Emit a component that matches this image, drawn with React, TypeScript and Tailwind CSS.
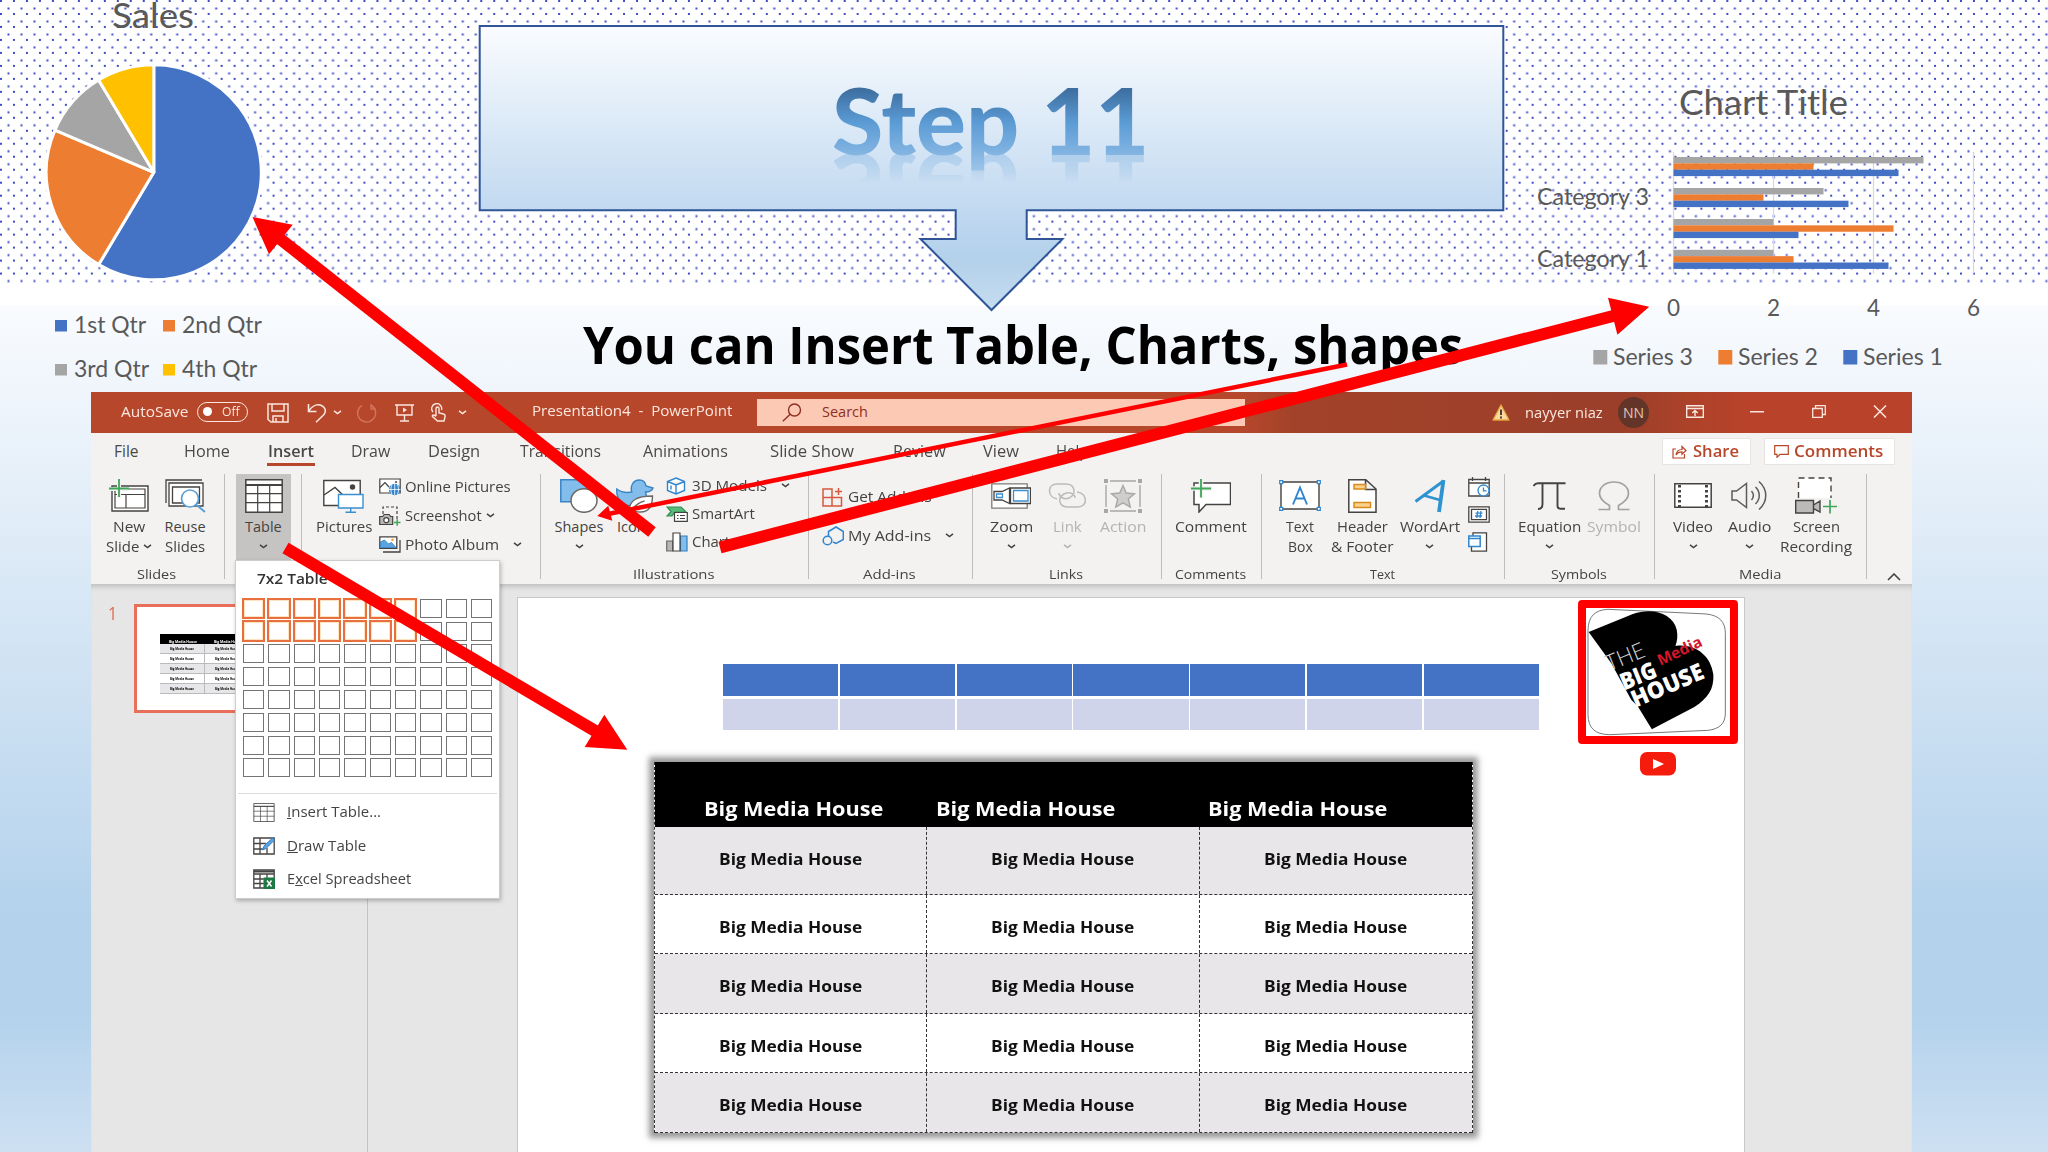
import { useLayoutEffect, useRef } from "react";
import type { ReactNode } from "react";
import clsx from "clsx";

// Stretches a single line of text to the width of its box
const Fit = ({ children, className }: { children: ReactNode; className?: string }) => {
  const box = useRef<HTMLSpanElement>(null);
  const text = useRef<HTMLSpanElement>(null);

  useLayoutEffect(() => {
    if (!box.current || !text.current) return;
    const ratio = box.current.clientWidth / text.current.offsetWidth;
    text.current.style.transform = `scaleX(${ratio})`;
  }, []);

  return (
    <span ref={box} className={clsx("block shrink-0 whitespace-nowrap", className)}>
      <span ref={text} className="inline-block origin-left">
        {children}
      </span>
    </span>
  );
};

const Chevron = ({ className }: { className?: string }) => (
  <svg viewBox="0 0 9 5" className={clsx("w-[9px] h-[5px] shrink-0", className)} fill="none" stroke="currentColor" strokeWidth="1.5">
    <path d="M1 .8 4.5 3.6 8 .8" />
  </svg>
);

/* ---------- slide background ---------- */

const Background = () => (
  <div className="absolute inset-0 flex flex-col">
    <svg className="w-full h-[284px] shrink-0">
      <defs>
        <pattern id="dots" width="12.98" height="12.98" patternUnits="userSpaceOnUse">
          <rect x="0" y="0" width="2" height="2" fill="#3f4cc4" />
          <rect x="7.5" y="7.5" width="2" height="2" fill="#3f4cc4" />
        </pattern>
      </defs>
      <rect width="2048" height="283" fill="url(#dots)" />
    </svg>
    <div className="h-[22px] bg-white" />
    <div className="flex-1 bg-[linear-gradient(#f9fbfe_0%,#b4d2ec_72%,#b4d2ec_84%,#cde0f2_100%)]" />
  </div>
);

/* ---------- charts ---------- */

const slices = [
  { value: 8.2, color: "#4472c4" },
  { value: 3.2, color: "#ed7d31" },
  { value: 1.4, color: "#a5a5a5" },
  { value: 1.2, color: "#ffc000" },
];

const quarters = [
  { label: "1st Qtr", x: 55, y: 333, w: 71, color: "#4472c4" },
  { label: "2nd Qtr", x: 163, y: 333, w: 79, color: "#ed7d31" },
  { label: "3rd Qtr", x: 55, y: 377, w: 74, color: "#a5a5a5" },
  { label: "4th Qtr", x: 163, y: 377, w: 74, color: "#ffc000" },
];

const PieChart = () => {
  const total = slices.reduce((sum, s) => sum + s.value, 0);
  const cx = 153.8;
  const cy = 172.3;
  const r = 107.5;
  let angle = 0;
  const paths = slices.map((s) => {
    const from = angle;
    angle += (s.value / total) * Math.PI * 2;
    const large = angle - from > Math.PI ? 1 : 0;
    return {
      color: s.color,
      d: `M${cx} ${cy}L${cx + r * Math.sin(from)} ${cy - r * Math.cos(from)}A${r} ${r} 0 ${large} 1 ${cx + r * Math.sin(angle)} ${cy - r * Math.cos(angle)}Z`,
    };
  });

  return (
    <svg viewBox="0 0 300 390" className="absolute left-0 top-0 w-[300px] h-[390px] font-[Lato,sans-serif]" fill="#595959">
      <text x="112" y="27.5" fontSize="34" textLength="82" lengthAdjust="spacingAndGlyphs">Sales</text>
      {paths.map((p) => (
        <path key={p.color} d={p.d} fill={p.color} stroke="#fff" strokeWidth="3" strokeLinejoin="round" />
      ))}
      {quarters.map((q) => (
        <g key={q.label}>
          <rect x={q.x} y={q.y - 13} width="12" height="11.5" fill={q.color} />
          <text x={q.x + 19} y={q.y} fontSize="23" textLength={q.w + 1} lengthAdjust="spacingAndGlyphs">{q.label}</text>
        </g>
      ))}
    </svg>
  );
};

const categories = [
  { y: 157, values: [5, 2.8, 4.5] },
  { y: 188, values: [3, 1.8, 3.5] },
  { y: 219, values: [2, 4.4, 2.5] },
  { y: 249.8, values: [2, 2.4, 4.3] },
];
const seriesColors = ["#a5a5a5", "#ed7d31", "#4472c4"];

const BarChart = () => (
  <svg viewBox="1530 60 450 330" className="absolute left-[1530px] top-[60px] w-[450px] h-[330px] font-[Lato,sans-serif]" fill="#595959">
    <text x="1679" y="114.5" fontSize="35" textLength="169" lengthAdjust="spacingAndGlyphs">Chart Title</text>
    {[0, 2, 4, 6].map((n) => (
      <g key={n}>
        <path d={`M${1673.5 + n * 50} 152V273.5`} stroke="#d9d9d9" strokeWidth="1.3" />
        <text x={1673.5 + n * 50} y="315.5" fontSize="22.5" textAnchor="middle">{n}</text>
      </g>
    ))}
    {categories.map((c) =>
      c.values.map((v, i) => (
        <rect key={`${c.y}-${i}`} x="1673.5" y={c.y + i * 6.35} width={v * 50} height="6.4" fill={seriesColors[i]} />
      )),
    )}
    <text x="1537" y="205" fontSize="23" textLength="112" lengthAdjust="spacingAndGlyphs">Category 3</text>
    <text x="1537" y="266.5" fontSize="23" textLength="112" lengthAdjust="spacingAndGlyphs">Category 1</text>
    {seriesColors.map((color, i) => (
      <g key={color}>
        <rect x={1593.3 + i * 125} y="350" width="14" height="14.5" fill={color} />
        <text x={1613 + i * 125} y="365" fontSize="23" textLength="80" lengthAdjust="spacingAndGlyphs">{`Series ${3 - i}`}</text>
      </g>
    ))}
  </svg>
);

/* ---------- banner ---------- */

const Banner = () => (
  <div className="absolute left-[478px] top-[24px] w-[1028px] h-[290px]">
    <svg viewBox="478 24 1028 290" className="absolute inset-0">
      <defs>
        <linearGradient id="banner" x1="0" y1="0" x2="0" y2="1">
          <stop offset="0" stopColor="#fafcff" />
          <stop offset=".74" stopColor="#b9d4ee" />
          <stop offset=".83" stopColor="#b4d1ea" />
          <stop offset="1" stopColor="#c5dcf0" />
        </linearGradient>
      </defs>
      <path
        d="M479.7 26H1503.3V210.3H1026.7V239H1062.5L991.5 310 920.5 239H955.7V210.3H479.7Z"
        fill="url(#banner)"
        stroke="#2f5597"
        strokeWidth="2"
      />
    </svg>
    <h1 className="relative ml-[354px] mt-[41px] w-[317px] h-[110px] leading-[110px] text-[92px] font-black font-[Lato,sans-serif] [-webkit-box-reflect:below_-42px_linear-gradient(transparent_55%,rgba(0,0,0,0.42)_80%)]">
      <Fit className="w-[317px] [&>span]:bg-[linear-gradient(#3a6a9a_19%,#5b9bd5_52%,#7cb0e0_76%,#a3c8ea_100%)] [&>span]:bg-clip-text [&>span]:text-transparent">Step 11</Fit>
    </h1>
  </div>
);

/* ---------- title bar ---------- */

const TitleBar = () => (
  <div className="h-[41px] shrink-0 flex items-center bg-[linear-gradient(90deg,#b7472a_0_63%,#a3422a_66%,#9b3f2a_84%,#ad4229_88%,#b8432a_91%,#b8432a_100%)] text-[#fbe6df] text-[14.5px] font-medium">
    <Fit className="ml-[30px] mt-[-2px] w-[67px]">AutoSave</Fit>
    <div className="ml-[9px] mt-[-2px] w-[51px] h-[20px] rounded-full border-[1.5px] border-[#fbe6df] flex items-center">
      <span className="ml-[5px] size-[9px] rounded-full bg-white" />
      <Fit className="ml-[10px] w-[18px] text-[13.5px] leading-none">Off</Fit>
    </div>
    <svg viewBox="0 0 22 20" className="ml-[19px] w-[22px] h-[20px]" fill="none" stroke="currentColor" strokeWidth="1.5">
      <path d="M1 1h20v18H4l-3-2.500z M5 1v7h12V1 M6 19v-6h10v6 M9 19v-4" />
    </svg>
    <svg viewBox="0 0 20 20" className="ml-[18px] w-[20px] h-[20px]" fill="none" stroke="currentColor" strokeWidth="1.6">
      <path d="M1.500 1v7.500h8 M1.800 8C5 3 10 .8 14.500 2.500c4 1.800 5 6 2.500 9L9 19.300" />
    </svg>
    <Chevron className="ml-[6px]" />
    <svg viewBox="0 0 21 21" className="ml-[14px] w-[21px] h-[21px] text-[#d2705a]" fill="none" stroke="currentColor" strokeWidth="1.5">
      <path d="M15 2v5h5 M15.500 3.500A9 9 0 1 1 6 3.300" />
    </svg>
    <svg viewBox="0 0 19 18" className="ml-[18px] w-[19px] h-[18px]" fill="none" stroke="currentColor" strokeWidth="1.4">
      <path d="M0 1h19 M2 1v10h15V1 M9.500 11v6 M5 17h9" />
      <path d="M8 3.500v5l4-2.500z" fill="currentColor" stroke="none" />
    </svg>
    <svg viewBox="0 0 15 19" className="ml-[17px] w-[15px] h-[19px]" fill="none" stroke="currentColor" strokeWidth="1.4">
      <path d="M2 9A5 5 0 1 1 10.500 7 M5 13V5.500a1.500 1.500 0 0 1 3 0V10l4.500 1c1.500.4 1.800 1.300 1.600 2.500L13 18H6.500L1.500 13.500c-.5-1.200.8-2 2-1.200L5 13.500" />
    </svg>
    <Chevron className="ml-[12px]" />
    <Fit className="ml-[65px] mt-[-3px] w-[200px] whitespace-pre">{"Presentation4  -  PowerPoint"}</Fit>
    <div className="ml-[25px] w-[488px] h-[27px] bg-[#fcc9b5] flex items-center text-[#8f2f20]">
      <svg viewBox="0 0 20 19" className="ml-[25px] w-[20px] h-[19px]" fill="none" stroke="currentColor" strokeWidth="1.4">
        <circle cx="12.500" cy="7" r="6" />
        <path d="M8.200 11.300.800 18.200" />
      </svg>
      <Fit className="ml-[20px] mt-[-2px] w-[46px]">Search</Fit>
    </div>
    <svg viewBox="0 0 18 17" className="ml-[247px] w-[18px] h-[17px]">
      <path d="M9 1 17 16H1z" fill="#fbd9a0" stroke="#e8a33d" strokeWidth="1.300" strokeLinejoin="round" />
      <path d="M9 5.500v5.500 M9 12.500v2" stroke="#3b3026" strokeWidth="1.800" />
    </svg>
    <Fit className="ml-[15px] w-[78px]">nayyer niaz</Fit>
    <div className="ml-[15px] size-[31px] rounded-full bg-[#633529] text-[#e3c3b9] flex items-center justify-center">
      <Fit className="w-[21px] text-[14px] font-normal">NN</Fit>
    </div>
    <svg viewBox="0 0 18 13" className="ml-[37px] mt-[-2px] w-[18px] h-[13px]" fill="none" stroke="currentColor" strokeWidth="1.400">
      <path d="M.7.700h16.600v11.600H.7z M.7 3.500h16.600 M9 11V5.500 M6.300 8 9 5.500 11.700 8" />
    </svg>
    <svg viewBox="0 0 14 2" className="ml-[46px] mt-[-2px] w-[14px] h-[2px]">
      <rect width="14" height="1.500" fill="currentColor" />
    </svg>
    <svg viewBox="0 0 14 13" className="ml-[48px] mt-[-2px] w-[14px] h-[13px]" fill="none" stroke="currentColor" strokeWidth="1.300">
      <path d="M.7 3.500h9.600v8.800H.7z M3.500 3.500V.700h9.800V9.500h-3" />
    </svg>
    <svg viewBox="0 0 14 13" className="ml-[47px] mt-[-2px] w-[14px] h-[13px]" fill="none" stroke="currentColor" strokeWidth="1.500">
      <path d="M1 .5 13 12.500 M13 .5 1 12.500" />
    </svg>
  </div>
);

/* ---------- tabs ---------- */

const tabs = [
  { label: "File", box: "ml-[23px] w-[25px]" },
  { label: "Home", box: "ml-[45px] w-[46px]" },
  { label: "Insert", box: "ml-[38px] w-[46px]", active: true },
  { label: "Draw", box: "ml-[37px] w-[39px]" },
  { label: "Design", box: "ml-[38px] w-[52px]" },
  { label: "Transitions", box: "ml-[40px] w-[81px]" },
  { label: "Animations", box: "ml-[42px] w-[85px]" },
  { label: "Slide Show", box: "ml-[42px] w-[84px]" },
  { label: "Review", box: "ml-[39px] w-[53px]" },
  { label: "View", box: "ml-[37px] w-[36px]" },
  { label: "Help", box: "ml-[37px] w-[33px]" },
];

const Tabs = () => (
  <div className="h-[37px] shrink-0 flex items-center text-[15.5px] text-[#4b4846]">
    {tabs.map((t) => (
      <div key={t.label} className="relative flex">
        <Fit className={clsx(t.box, t.active && "font-semibold")}>{t.label}</Fit>
        {t.active && <span className="absolute right-[-1px] top-[23px] w-[48px] h-[3px] bg-[#b7472a]" />}
      </div>
    ))}
    <div className="ml-auto w-[89px] h-[27px] bg-white border border-[#e8e4e2] flex items-center text-[#b7472a] font-semibold">
      <svg viewBox="0 0 15 14" className="ml-[9px] w-[15px] h-[14px]" fill="none" stroke="currentColor" strokeWidth="1.200">
        <path d="M4 4H1v9h11.500V9 M4 10c.5-4 3-5.500 6-5.500V1.500l4 4-4 3.800V6.800C7.500 6.800 5.500 7.500 4 10z" />
      </svg>
      <Fit className="ml-[6px] w-[46px]">Share</Fit>
    </div>
    <div className="ml-[13px] mr-[17px] w-[131px] h-[27px] bg-white border border-[#e8e4e2] flex items-center text-[#b7472a] font-semibold">
      <svg viewBox="0 0 15 13" className="ml-[9px] w-[15px] h-[13px]" fill="none" stroke="currentColor" strokeWidth="1.200">
        <path d="M.7.700h13.600v8.600H6l-3 3v-3H.7z" />
      </svg>
      <Fit className="ml-[5px] w-[89px]">Comments</Fit>
    </div>
  </div>
);

/* ---------- ribbon ---------- */

const Sep = () => <div className="w-px h-[105px] shrink-0 bg-[#bfbdbb]" />;

const Group = ({ label, width, labelWidth, children }: { label?: string; width: string; labelWidth?: string; children: ReactNode }) => (
  <div className={clsx("h-[108px] shrink-0 flex flex-col", width)}>
    <div className="h-[92px] flex items-start">{children}</div>
    {label && (
      <div className="h-[16px] pr-[2px] flex items-center justify-center text-[13px] leading-[16px]">
        <Fit className={labelWidth}>{label}</Fit>
      </div>
    )}
  </div>
);

type BigButtonProps = {
  icon: ReactNode;
  box: string;
  first: [string, string];
  second?: [string, string];
  arrow?: boolean;
};

const BigButton = ({ icon, box, first, second, arrow }: BigButtonProps) => (
  <div className={clsx("shrink-0 flex flex-col items-center h-[86px] text-[14.500px] leading-[19.5px]", box)}>
    <div className="h-[43px] flex items-center">{icon}</div>
    <Fit className={first[1]}>{first[0]}</Fit>
    <div className="h-[19.5px] flex items-center">
      {second && <Fit className={second[1]}>{second[0]}</Fit>}
      {arrow && <Chevron className={second ? "ml-[4px]" : ""} />}
    </div>
  </div>
);

const SmallButton = ({ icon, label, box, arrow, row }: { icon: ReactNode; label: string; box: string; arrow?: string; row: string }) => (
  <div className={clsx("flex items-center text-[14.500px]", row)}>
    {icon}
    <Fit className={clsx("ml-[4px]", box)}>{label}</Fit>
    {arrow && <Chevron className={arrow} />}
  </div>
);

const ink = "#454341";

const TableIcon = ({ className }: { className: string }) => (
  <svg viewBox="0 0 38 34" className={className} fill="#fff" stroke={ink} strokeWidth="1.500">
    <path d="M.8.800h36.400v32.400H.8z" />
    <path d="M.8 6h36.400" strokeWidth="2" />
    <path d="M.8 14.700h36.400 M.8 23.700h36.400 M12.700 6v27 M24.700 6v27" strokeWidth="1.200" />
  </svg>
);

const NewSlideIcon = () => (
  <svg viewBox="0 0 40 34" className="w-[40px] h-[34px]" fill="#fff" stroke={ink} strokeWidth="1.400">
    <path d="M3 7h36v25H3z" />
    <path d="M6 10h30v19H6z M6 15.500h30 M17 15.500v13.500" strokeWidth="1.200" />
    <path d="M0 10h20 M10 0v19" stroke="#f3f2f1" strokeWidth="4" />
    <path d="M0 9.500h20 M10 0v18" stroke="#3fa65a" strokeWidth="1.800" />
  </svg>
);

const ReuseIcon = () => (
  <svg viewBox="0 0 41 35" className="w-[41px] h-[35px]" fill="#fff" stroke={ink} strokeWidth="1.300">
    <path d="M1 25V2h36" fill="none" />
    <path d="M4 28V5h34v23z M7.500 25V9h27v16z" />
    <circle cx="25" cy="20.500" r="8.500" stroke="#5b9fd8" strokeWidth="1.700" />
    <path d="M31 26.500 40 34" stroke="#5b9fd8" strokeWidth="2" />
  </svg>
);

const PicturesIcon = () => (
  <svg viewBox="0 0 41 34" className="w-[41px] h-[34px]" fill="#fff" stroke={ink} strokeWidth="1.400">
    <path d="M.8 1.500h36.400v25H.8z" />
    <path d="M1 16 12 8.500 23 19" fill="none" />
    <circle cx="29.500" cy="8" r="2" fill={ink} />
    <path d="M15.500 15.500H40v13.500H15.500z" stroke="#3a8fd0" />
    <path d="M27.700 29v4 M22.500 33.200h10.500" stroke="#3a8fd0" />
  </svg>
);

const OnlinePicturesIcon = () => (
  <svg viewBox="0 0 22 18" className="w-[22px] h-[18px]" fill="#fff" stroke={ink} strokeWidth="1.200">
    <path d="M.8 1h20.400v14H.8z" />
    <path d="M1 9.500 6 4.500 10 9" fill="none" />
    <circle cx="17" cy="4" r="1" fill={ink} stroke="none" />
    <circle cx="15.700" cy="11.500" r="5.800" fill="#2f86cf" stroke="none" />
    <path d="M10 11.500h11.400 M15.700 6v11 M13 6.500c-1.500 3-1.500 7 0 10 M18.400 6.500c1.500 3 1.500 7 0 10" stroke="#fff" strokeWidth=".8" fill="none" />
  </svg>
);

const ScreenshotIcon = () => (
  <svg viewBox="0 0 22 20" className="w-[22px] h-[20px]" fill="none" stroke={ink} strokeWidth="1.200">
    <path d="M4 8V1h14v12" strokeDasharray="3 2" />
    <path d="M.7 10.500h3l1.500-2h5l1.500 2h2v8H.7z" fill="#b9b7b5" />
    <circle cx="7.300" cy="14.200" r="2.500" fill="#fff" />
    <path d="M15 16.500h6.500 M18.200 13.300v6.500" stroke="#3fa65a" strokeWidth="1.500" />
  </svg>
);

const AlbumIcon = () => (
  <svg viewBox="0 0 22 17" className="w-[22px] h-[17px]" fill="#fff" stroke={ink} strokeWidth="1.300">
    <path d="M4 16h17V4" fill="none" />
    <path d="M.8.800h17v11.500H.8z" />
    <path d="M1.500 11.500V6l4-2 4 4 3-1.500 4.500 5z" fill="#5aa5e0" stroke="#2f7fc4" strokeWidth=".8" />
    <circle cx="13.500" cy="3.700" r="1.300" fill="#f0a040" stroke="none" />
  </svg>
);

const ShapesIcon = () => (
  <svg viewBox="0 0 38 34" className="w-[38px] h-[34px]" strokeWidth="1.500">
    <path d="M.8.800h25.500v22H.8z" fill="#83bdec" stroke="#3a84c4" />
    <ellipse cx="24" cy="21.500" rx="13" ry="11.800" fill="#fff" stroke="#6b6967" />
  </svg>
);

const IconsIcon = () => (
  <svg viewBox="0 0 38 34" className="w-[38px] h-[34px]" strokeWidth="1.400">
    <path d="M.8 10c4 3 10 4 15 3C14 7 17 1 23.500 1c4 0 6 3 6.500 6l7 2c-1 3-4 4-7.500 4 3 8-4 14-13 14C6 27 0 20 .8 10z" fill="#83bdec" stroke="#3a84c4" />
    <path d="M13 33c0-12 8-16 23.500-16 0 10-4 16-12 16-4 0-7-1-8-3 4-5 8-7 12-8" fill="#fff" stroke="#6b6967" />
  </svg>
);

const CubeIcon = () => (
  <svg viewBox="0 0 22 18" className="w-[22px] h-[18px]" fill="#fff" stroke="#2f86cf" strokeWidth="1.400">
    <path d="M10 1 18.500 4.500v9L10 17 1.500 13.500v-9z M1.500 4.500 10 8l8.500-3.500 M10 8v9 M5 8.500v4" />
  </svg>
);

const SmartArtIcon = () => (
  <svg viewBox="0 0 22 16" className="w-[22px] h-[16px]" strokeWidth="1.200">
    <path d="M1 1h14l5 5H9l-3 4H1l4-4.500z" fill="#5cb87a" stroke="#2f9150" />
    <path d="M8.500 6.500h12.800v8.800H8.500z" fill="#fff" stroke={ink} />
    <path d="M11 9.500h1.500 M14 9.500h5 M11 12.500h1.500 M14 12.500h5" stroke={ink} />
  </svg>
);

const ChartIcon = () => (
  <svg viewBox="0 0 22 20" className="w-[22px] h-[20px]" strokeWidth="1.200">
    <path d="M.7 9h6v10h-6z" fill="#b9b7b5" stroke="#6b6967" />
    <path d="M14.500 4h6.500v15h-6.500z" fill="#83bdec" stroke="#2f7fc4" />
    <path d="M7 1h7v18H7z" fill="#fff" stroke={ink} />
  </svg>
);

const GetAddinsIcon = () => (
  <svg viewBox="0 0 22 20" className="w-[22px] h-[20px]" fill="none" stroke="#d9583b" strokeWidth="1.500">
    <path d="M1 2h9v17H1z M1 10.500h18.500V19H10 M16.500 1v7 M13 4.500h7" />
  </svg>
);

const MyAddinsIcon = () => (
  <svg viewBox="0 0 22 20" className="w-[22px] h-[20px]" fill="none" stroke="#2f86cf" strokeWidth="1.500">
    <path d="M6.500 10V5.500L14 1l7.300 4.500v8L14 17.500 11 16" />
    <circle cx="5.500" cy="14.500" r="4.300" />
  </svg>
);

const ZoomIcon = () => (
  <svg viewBox="0 0 40 26" className="w-[40px] h-[26px]" fill="#fff" stroke={ink} strokeWidth="1.300">
    <path d="M.8.800h35.400v24.400H.8z" stroke="#7d7b79" />
    <path d="M3 8.500h8L18.500 5v15.500L11 17H3z" />
    <path d="M5.500 11h6v3.500h-6z" stroke="#3a8fd0" />
    <path d="M19.500 5H39.500v15.500h-20z" />
    <path d="M22.500 7.500H37v10.500H22.500z" stroke="#3a8fd0" />
  </svg>
);

const LinkIcon = () => (
  <svg viewBox="0 0 38 25" className="w-[38px] h-[25px]" fill="none" stroke="#bdbbb9" strokeWidth="1.500">
    <path d="M9 16C-1 14-1 1 9 1h9c9 0 11 10 3 14-5 2-10-1-10-5" />
    <path d="M29 9c11 1 11 15 1 15H20c-9 0-11-9-4-13 6-3 11 0 11 4" />
  </svg>
);

const ActionIcon = () => (
  <svg viewBox="0 0 38 34" className="w-[38px] h-[34px]" fill="none" stroke="#a9a7a5" strokeWidth="1.400">
    <path d="M6 2h26 M6 32h26 M2 6v22 M36 6v22" />
    <path d="M0 0h4v4H0z M34 0h4v4h-4z M0 30h4v4H0z M34 30h4v4h-4z" fill="#a9a7a5" stroke="none" />
    <path d="m19 6.500 3.200 7.500 8.300.7-6.200 5.300 2 8L19 23.800 11.700 28l2-8-6.200-5.300 8.300-.7z" fill="#d0cecc" />
  </svg>
);

const CommentIcon = () => (
  <svg viewBox="0 0 40 34" className="w-[40px] h-[34px]" fill="#fff" stroke={ink} strokeWidth="1.500">
    <path d="M3 4h36.500v21.500H15l-7 7.500v-7.500H3z" />
    <path d="M0 9.500h21 M10 0v19" stroke="#f3f2f1" strokeWidth="4.500" />
    <path d="M0 9.500h20 M10 0v18.500" stroke="#3fa65a" strokeWidth="1.800" />
  </svg>
);

const TextBoxIcon = () => (
  <svg viewBox="0 0 42 31" className="w-[42px] h-[31px]" fill="#fff" stroke={ink} strokeWidth="1.400">
    <path d="M2 2h38v27H2z" />
    <g stroke="#2f86cf" strokeWidth="1.200">
      <path d="M.7.700h3v3h-3z M38.300.700h3v3h-3z M.7 27.300h3v3h-3z M38.300 27.300h3v3h-3z" />
      <path d="M14 24.500 21 7.500l7 17 M16.500 18.500h9" fill="none" strokeWidth="1.900" />
    </g>
  </svg>
);

const HeaderIcon = () => (
  <svg viewBox="0 0 29 34" className="w-[29px] h-[34px]" fill="#fff" stroke={ink} strokeWidth="1.500">
    <path d="M.8.800h17L28 10v23.200H.8z M17.500 1v9.500H28" />
    <path d="M6 5.500h11.500V10H6z M6 23.500h16.500v5H6z" fill="#fbd28b" stroke="#d98a1e" />
  </svg>
);

const WordArtIcon = () => (
  <svg viewBox="0 0 32 34" className="w-[32px] h-[34px]" fill="none" stroke="#2f93d2">
    <path d="M1.500 22.500 29.500 2" strokeWidth="3" />
    <path d="M29.500 1 25 33" strokeWidth="3.800" />
    <path d="M10 16.500 26 21" strokeWidth="2.600" />
  </svg>
);

const DateIcon = () => (
  <svg viewBox="0 0 22 20" className="w-[22px] h-[20px]" fill="#fff" stroke={ink} strokeWidth="1.300">
    <path d="M.8 2.500h20.400V19H.8z M.8 6h20.400 M4.500 0v4 M17.500 0v4" />
    <circle cx="15.500" cy="13.500" r="5.500" stroke="#2f86cf" />
    <path d="M15.500 10.500v3.300h3" stroke="#2f86cf" fill="none" />
  </svg>
);

const NumberIcon = () => (
  <svg viewBox="0 0 22 17" className="w-[22px] h-[17px]" fill="#fff" stroke={ink} strokeWidth="1.300">
    <path d="M.8.800h20.400v15.400H.8z M3.500 3.300h15v10.400h-15z" />
    <path d="M9.800 5 8.800 12 M13 5l-1 7 M7.500 7.200h7 M7 10h7" stroke="#2f86cf" />
  </svg>
);

const ObjectIcon = () => (
  <svg viewBox="0 0 22 20" className="w-[22px] h-[20px]" fill="#fff" stroke={ink} strokeWidth="1.300">
    <path d="M5 5V.800h13.500v18.400H3.500V15" />
    <path d="M.8 4h11.400v10.500H.8z M.8 6.500h11.400" stroke="#2f86cf" strokeWidth="1.500" />
  </svg>
);

const PiIcon = () => (
  <svg viewBox="0 0 33 28" className="w-[33px] h-[28px]" fill="none" stroke={ink} strokeWidth="1.900">
    <path d="M.5 4C2 1.500 3 1.200 5 1.200h27.500 M9.500 1.500V22c0 3-1 5-4.500 5 M24.500 1.500V24c0 2 1 2.700 3 2.700h4.500" />
  </svg>
);

const OmegaIcon = () => (
  <svg viewBox="0 0 32 30" className="w-[32px] h-[30px]" fill="none" stroke="#a3a19f" strokeWidth="1.700">
    <path d="M.5 28.500h11v-4C5 21 1.500 17 1.500 12.500 1.500 5.500 8 1 16 1s14.500 4.500 14.500 11.500c0 4.500-3.500 8.500-10 12v4h11" />
  </svg>
);

const VideoIcon = () => (
  <svg viewBox="0 0 38 25" className="w-[38px] h-[25px]" fill="#fff" stroke={ink} strokeWidth="1.500">
    <path d="M.8.800h36.400v23.400H.8z" />
    <path d="M5.500 2v22 M32.500 2v22" strokeWidth="3" strokeDasharray="2.500 2.500" />
  </svg>
);

const AudioIcon = () => (
  <svg viewBox="0 0 36 31" className="w-[36px] h-[31px]" fill="none" stroke="#5d5b59" strokeWidth="1.500">
    <path d="M1 11h4.500L15.500 3.500v24L5.500 20H1z" />
    <path d="M20.500 11c2.500 3 2.500 6 0 9 M24.500 7c5 5 5 12 0 17 M28 1.500c9 8 9 20 0 28" />
  </svg>
);

const RecordIcon = () => (
  <svg viewBox="0 0 42 37" className="w-[42px] h-[37px]" stroke={ink} strokeWidth="1.400">
    <path d="M3.500 21V1H36v20" fill="#fff" strokeDasharray="6 4" />
    <path d="M.7 23.500H18.500v12.500H.7z M18.500 28 25 24v11l-6.500-3.500z" fill="#bcbab8" />
    <path d="M28 29.500h14 M35 23v13.500" stroke="#3fa65a" strokeWidth="1.700" />
  </svg>
);

const Ribbon = () => (
  <div className="h-[114px] shrink-0 flex items-start pt-[4px] text-[#454240]">
    <Group label="Slides" width="w-[133px]" labelWidth="w-[39px]">
      <BigButton icon={<NewSlideIcon />} box="ml-[10px] w-[56px]" first={["New", "w-[32px]"]} second={["Slide", "w-[33px]"]} arrow />
      <BigButton icon={<ReuseIcon />} box="w-[56px]" first={["Reuse", "w-[41px]"]} second={["Slides", "w-[40px]"]} />
    </Group>
    <Sep />
    <Group width="w-[76px]">
      <BigButton icon={<TableIcon className="w-[38px] h-[34px]" />} box="ml-[11px] w-[55px] bg-[#c6c4c3]" first={["Table", "w-[37px]"]} arrow />
    </Group>
    <Sep />
    <Group label="Images" width="w-[238px]" labelWidth="w-[42px]">
      <BigButton icon={<PicturesIcon />} box="ml-[9px] w-[65px]" first={["Pictures", "w-[56px]"]} />
      <div className="ml-[3px] -mt-[2px]">
        <SmallButton row="h-[29px]" icon={<OnlinePicturesIcon />} label="Online Pictures" box="w-[106px]" />
        <SmallButton row="h-[29px]" icon={<ScreenshotIcon />} label="Screenshot" box="w-[77px]" arrow="ml-[4px]" />
        <SmallButton row="h-[29px]" icon={<AlbumIcon />} label="Photo Album" box="w-[94px]" arrow="ml-[14px]" />
      </div>
    </Group>
    <Sep />
    <Group label="Illustrations" width="w-[267px]" labelWidth="w-[81px]">
      <BigButton icon={<ShapesIcon />} box="ml-[10px] w-[56px]" first={["Shapes", "w-[49px]"]} arrow />
      <BigButton icon={<IconsIcon />} box="w-[56px]" first={["Icons", "w-[36px]"]} />
      <div className="ml-[3px] -mt-[2px]">
        <SmallButton row="h-[27.5px]" icon={<CubeIcon />} label="3D Models" box="w-[75px]" arrow="ml-[14px]" />
        <SmallButton row="h-[28px]" icon={<SmartArtIcon />} label="SmartArt" box="w-[63px]" />
        <SmallButton row="h-[28px]" icon={<ChartIcon />} label="Chart" box="w-[38px]" />
      </div>
    </Group>
    <Sep />
    <Group label="Add-ins" width="w-[163px]" labelWidth="w-[53px]">
      <div className="ml-[13px] mt-[3px]">
        <SmallButton row="h-[39px]" icon={<GetAddinsIcon />} label="Get Add-ins" box="w-[84px]" />
        <SmallButton row="h-[39px]" icon={<MyAddinsIcon />} label="My Add-ins" box="w-[83px]" arrow="ml-[14px]" />
      </div>
    </Group>
    <Sep />
    <Group label="Links" width="w-[188px]" labelWidth="w-[34px]">
      <BigButton icon={<ZoomIcon />} box="ml-[12px] w-[52px]" first={["Zoom", "w-[43px]"]} arrow />
      <BigButton icon={<LinkIcon />} box="w-[60px] text-[#b5b3b1]" first={["Link", "w-[29px]"]} arrow />
      <BigButton icon={<ActionIcon />} box="w-[52px] text-[#b5b3b1]" first={["Action", "w-[47px]"]} />
    </Group>
    <Sep />
    <Group label="Comments" width="w-[99px]" labelWidth="w-[71px]">
      <BigButton icon={<CommentIcon />} box="w-[97px]" first={["Comment", "w-[72px]"]} />
    </Group>
    <Sep />
    <Group label="Text" width="w-[242px]" labelWidth="w-[25px]">
      <BigButton icon={<TextBoxIcon />} box="ml-[14px] w-[48px]" first={["Text", "w-[28px]"]} second={["Box", "w-[25px]"]} />
      <BigButton icon={<HeaderIcon />} box="ml-[2px] w-[73px]" first={["Header", "w-[51px]"]} second={["& Footer", "w-[63px]"]} />
      <BigButton icon={<WordArtIcon />} box="w-[61px]" first={["WordArt", "w-[60px]"]} arrow />
      <div className="ml-[8px] -mt-[2px] h-[84px] flex flex-col justify-around">
        <DateIcon />
        <NumberIcon />
        <ObjectIcon />
      </div>
    </Group>
    <Sep />
    <Group label="Symbols" width="w-[149px]" labelWidth="w-[56px]">
      <BigButton icon={<PiIcon />} box="ml-[11px] w-[66px]" first={["Equation", "w-[63px]"]} arrow />
      <BigButton icon={<OmegaIcon />} box="w-[63px] text-[#b5b3b1]" first={["Symbol", "w-[54px]"]} />
    </Group>
    <Sep />
    <Group label="Media" width="w-[211px]" labelWidth="w-[42px]">
      <BigButton icon={<VideoIcon />} box="ml-[13px] w-[50px]" first={["Video", "w-[40px]"]} arrow />
      <BigButton icon={<AudioIcon />} box="w-[62px]" first={["Audio", "w-[43px]"]} arrow />
      <BigButton icon={<RecordIcon />} box="w-[72px]" first={["Screen", "w-[47px]"]} second={["Recording", "w-[72px]"]} />
    </Group>
    <Sep />
    <svg viewBox="0 0 14 8" className="ml-[20px] mt-[99px] w-[14px] h-[8px]" fill="none" stroke="currentColor" strokeWidth="1.600">
      <path d="M1 7 7 1l6 6" />
    </svg>
  </div>
);

/* ---------- slide and thumbnails ---------- */

const columns = [0, 1, 2];
const name = "Big Media House";

const Thumbnail = () => (
  <div className="ml-[17px] mt-[20px] w-[196px] h-[109px] shrink-0 border-[3.500px] border-[#e8705a] bg-white">
    <div className="ml-[23px] mt-[27px] w-[135px] text-[3.500px] font-bold text-black">
      <div className="h-[10px] bg-black text-white grid grid-cols-3 items-end justify-items-center leading-[4px]">
        {columns.map((c) => <Fit key={c} className="w-[28px]">{name}</Fit>)}
      </div>
      {[0, 1, 2, 3, 4].map((r) => (
        <div key={r} className={clsx("h-[10px] grid grid-cols-3 border-b border-[#bbb]", r % 2 === 0 ? "bg-[#e7e6e8]" : "bg-white")}>
          {columns.map((c) => (
            <div key={c} className="flex items-center justify-center border-r border-[#bbb] leading-[4px]">
              <Fit className="w-[24px]">{name}</Fit>
            </div>
          ))}
        </div>
      ))}
    </div>
  </div>
);

const headCells = ["pl-[49px]", "pl-[9px]", "pl-[8px]"];
const rowHeights = ["h-[68px]", "h-[59.500px]", "h-[59.500px]", "h-[59.500px]", "h-[60px]"];

const MediaTable = () => (
  <div className="ml-[136px] mt-[32px] w-[819px] border-x-[1.500px] border-dashed border-[#333] bg-white font-['Open_Sans',sans-serif] font-bold shadow-[0_0_6px_5px_rgba(70,70,70,0.55)]">
    <div className="h-[64.500px] bg-black text-white grid grid-cols-3 items-end">
      {headCells.map((pad, i) => (
        <div key={i} className={clsx("pb-[3px] text-[20px] leading-[30px]", pad)}>
          <Fit className="w-[179px]">{name}</Fit>
        </div>
      ))}
    </div>
    {rowHeights.map((h, r) => (
      <div key={r} className={clsx("grid grid-cols-3 border-b-[1.500px] border-dashed border-[#333]", h, r % 2 === 0 ? "bg-[#e8e6e9]" : "bg-white")}>
        {columns.map((c) => (
          <div key={c} className={clsx("flex items-center justify-center text-[15.500px] text-[#111]", r > 0 && "pt-[7px]", c < 2 && "border-r-[1.500px] border-dashed border-[#333]")}>
            <Fit className="w-[143px]">{name}</Fit>
          </div>
        ))}
      </div>
    ))}
  </div>
);

const Logo = () => (
  <div className="absolute left-[1060px] top-[2px] w-[160px] flex flex-col items-center">
    <svg viewBox="0 0 481 433" className="w-[160px] h-[144px] font-['Open_Sans',sans-serif]">
      <rect x="12" y="12" width="457" height="409" fill="#fff" stroke="#fe0000" strokeWidth="24" strokeLinejoin="round" />
      <path d="M90 28 385 42C425 46 443 66 443 100V340C443 372 425 388 390 392L95 405C50 404 31 385 30 345V90C31 50 50 30 90 28Z" fill="none" stroke="#777" strokeWidth="3" />
      <path d="M32 96 165 42C225 22 285 40 297 90 300 108 299 122 293 138 350 130 400 165 407 225 409 270 390 295 350 322L222 389 180 320 160 300 100 190Z" fill="#000" />
      <g transform="translate(94 214) rotate(-22)">
        <text fontSize="66" fontWeight="300" textLength="122" lengthAdjust="spacingAndGlyphs" fill="#cfcfcf">THE</text>
      </g>
      <g transform="translate(138 272) rotate(-22)">
        <text fontSize="70" fontWeight="800" textLength="112" lengthAdjust="spacingAndGlyphs" fill="#fff">BIG</text>
      </g>
      <g transform="translate(172 324) rotate(-23)">
        <text fontSize="70" fontWeight="800" textLength="230" lengthAdjust="spacingAndGlyphs" fill="#fff">HOUSE</text>
      </g>
      <g transform="translate(247 198) rotate(-25)">
        <text fontSize="46" fontWeight="700" textLength="144" lengthAdjust="spacingAndGlyphs" fill="#d3162b">Media</text>
      </g>
    </svg>
    <svg viewBox="0 0 36 24" className="mt-[8px] w-[36px] h-[24px]">
      <rect width="36" height="23.500" rx="7" fill="#f61c0d" />
      <path d="M13 7 24 12 13 17z" fill="#fff" />
    </svg>
  </div>
);

const Slide = () => (
  <div className="relative ml-[149px] mt-[13px] w-[1228px] h-[600px] bg-white border border-[#c9c7c7]">
    <div className="ml-[205px] mt-[66px] w-[816px]">
      <div className="grid grid-cols-7 gap-x-[1.500px] h-[32px]">
        {[...Array(7)].map((_, i) => <div key={i} className="bg-[#4472c4]" />)}
      </div>
      <div className="mt-[3px] grid grid-cols-7 gap-x-[1.500px] h-[31px]">
        {[...Array(7)].map((_, i) => <div key={i} className="bg-[#d0d4ea]" />)}
      </div>
    </div>
    <MediaTable />
    <Logo />
  </div>
);

/* ---------- table menu ---------- */

const TableMenu = () => (
  <div className="absolute left-[144px] top-[168px] w-[265px] h-[339px] bg-white border border-[#cfcdcc] shadow-[1px_2px_4px_rgba(0,0,0,0.25)] text-[#444]">
    <Fit className="ml-[21px] mt-[4px] w-[71px] text-[15px] leading-[26px] font-semibold text-[#333]">7x2 Table</Fit>
    <div className="ml-[5px] mt-[6px] grid grid-cols-[repeat(10,25.33px)] auto-rows-[22.8px]">
      {[...Array(80)].map((_, i) => {
        const picked = i < 20 && i % 10 < 7;
        return (
          <div key={i} className="flex items-center justify-center">
            <div
              className={
                picked
                  ? "w-[23.500px] h-[21.500px] border-[2px] border-[#e8703f] shadow-[inset_0_0_0_1px_#fde3c0]"
                  : "w-[21.500px] h-[19px] border-[1.500px] border-[#757373]"
              }
            />
          </div>
        );
      })}
    </div>
    <div className="mx-[2px] mt-[14px] h-px bg-[#dcdcdc]" />
    <div className="ml-[17px] mt-[1px] text-[14.500px]">
      <div className="h-[33.600px] flex items-center">
        <TableIcon className="w-[22px] h-[19px]" />
        <Fit className="ml-[12px] w-[94px]"><u>I</u>nsert Table...</Fit>
      </div>
      <div className="h-[33.600px] flex items-center">
        <svg viewBox="0 0 22 18" className="w-[22px] h-[18px]" fill="none" stroke={ink} strokeWidth="1.300">
          <path d="M.8 1h20.400v16H.8z M.8 6.500h12 M.8 12h9 M7 1v16 M14 11v6" />
          <path d="M9.500 13 11 9 19.500 1l2 2L13 11.500z" fill="#5aa5e0" stroke="#2f7fc4" strokeWidth="1" />
        </svg>
        <Fit className="ml-[12px] w-[79px]"><u>D</u>raw Table</Fit>
      </div>
      <div className="h-[33.600px] flex items-center">
        <svg viewBox="0 0 22 20" className="w-[22px] h-[20px]" fill="none" stroke={ink} strokeWidth="1.300">
          <path d="M.8 1h20.400v18H.8z M.8 5h20.400 M.8 10h10 M.8 14.500h10 M7 5v14 M14 5v4" />
          <path d="M.8 2.500h20.400" strokeWidth="2" />
          <rect x="10.500" y="8.500" width="11.500" height="11.500" fill="#1d7a45" stroke="none" />
          <path d="m14 11.500 4.500 6 M18.500 11.500l-4.500 6" stroke="#fff" strokeWidth="1.500" />
        </svg>
        <Fit className="ml-[12px] w-[124px]">E<u>x</u>cel Spreadsheet</Fit>
      </div>
    </div>
  </div>
);

const PowerPoint = () => (
  <div className="absolute left-[91px] top-[392px] w-[1821px] h-[760px] flex flex-col bg-[#f3f2f1] font-['Open_Sans',sans-serif] font-medium">
    <TitleBar />
    <Tabs />
    <Ribbon />
    <div className="h-[568px] shrink-0 flex items-start overflow-hidden bg-[#e7e6e7] shadow-[inset_0_6px_5px_-3px_rgba(0,0,0,0.16)]">
      <div className="w-[277px] h-full shrink-0 flex items-start border-r border-[#c4c2c2]">
        <Fit className="ml-[17px] mt-[19px] w-[9px] text-[18px] leading-[20px] text-[#e0694a]">1</Fit>
        <Thumbnail />
      </div>
      <Slide />
    </div>
    <TableMenu />
  </div>
);

/* ---------- red pointers ---------- */

const Pointers = () => (
  <svg viewBox="0 0 2048 1152" className="absolute inset-0 w-[2048px] h-[1152px]" fill="#fe0000" stroke="#fe0000">
    <path d="M652 532 279 238" strokeWidth="12" />
    <path d="M252.500 217 292.700 224.700 269 254.300z" stroke="none" />
    <path d="M1347 364.500 608 514" strokeWidth="4.500" />
    <path d="M597.300 516 608.300 505.700 612.300 520.700z" stroke="none" />
    <path d="M720 547.500 1615 315.500" strokeWidth="12" />
    <path d="M1649.200 306.700 1608 297.700 1617.400 334.700z" stroke="none" />
    <path d="M285.500 548 597 732" strokeWidth="12" />
    <path d="M627.300 749.700 604.300 714.700 584.700 747z" stroke="none" />
  </svg>
);

const App = () => (
  <div className="relative w-[2048px] h-[1152px] overflow-hidden bg-white">
    <Background />
    <Banner />
    <PieChart />
    <BarChart />
    <h2 className="absolute left-[583px] top-[314px] text-[52px] leading-[60px] font-bold text-black font-['Open_Sans',sans-serif]">
      <Fit className="w-[880px]">You can Insert Table, Charts, shapes</Fit>
    </h2>
    <PowerPoint />
    <Pointers />
  </div>
);

export default App;
